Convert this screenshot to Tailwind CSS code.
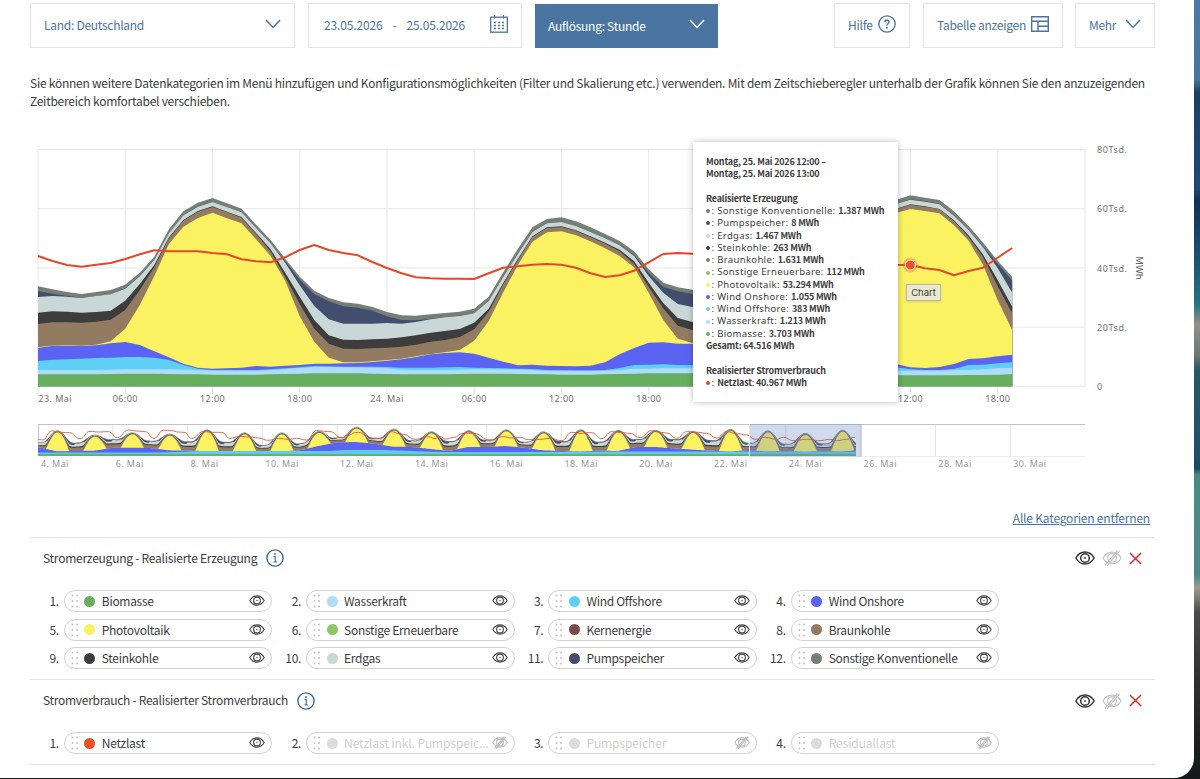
<!DOCTYPE html>
<html lang="de">
<head>
  <meta charset="UTF-8" />
  <meta name="viewport" content="width=device-width, initial-scale=1.0"/>
  <title>Marktdaten visualisieren</title>
  <script src="https://cdn.jsdelivr.net/npm/@tailwindcss/browser@4"></script>
</head>
<body class="h-[779px] overflow-hidden bg-[linear-gradient(180deg,#4a7ba6_0,#45749f_80px,#1d3f66_92px,#1f4a70_190px,#123059_200px,#1a5570_260px,#2a7482_305px,#8e928a_325px,#6d7673_355px,#255a68_370px,#1d5068_455px,#164a5e_468px,#4a8a85_475px,#4b8a84_575px,#a09c93_588px,#4a4c48_612px,#2e302d_680px,#14181a_779px)] font-['Noto_Sans_CJK_SC',sans-serif] text-[#3c3c3c]">

<svg class="hidden">
  <symbol id="eye" viewBox="0 0 20 14" fill="none" stroke="currentColor">
    <path d="M.9 7C3 3.2 6.2 1.1 10 1.1S17 3.2 19.1 7C17 10.8 13.800 12.900 10 12.900S3 10.800 .9 7Z"/>
    <circle cx="10" cy="7" r="4.300"/><circle cx="10" cy="7" r=".9" fill="currentColor" stroke="none"/>
  </symbol>
  <symbol id="eye-off" viewBox="0 0 20 14" fill="none" stroke="currentColor" overflow="visible">
    <path d="M.9 7C3 3.2 6.2 1.1 10 1.1S17 3.2 19.1 7C17 10.8 13.800 12.900 10 12.900S3 10.800 .9 7Z"/>
    <circle cx="10" cy="7" r="4.300"/><path d="M3 14.500 15.500-.500M5 14.800 17.500-.200"/>
  </symbol>
  <symbol id="down" viewBox="0 0 16 10" fill="none" stroke="currentColor">
    <path d="M1 1 8 8.500 15 1"/>
  </symbol>
  <symbol id="info" viewBox="0 0 18 18" fill="none" stroke="currentColor">
    <circle cx="9" cy="9" r="8.100" stroke-width="1.400"/><path d="M7.500 7.500H9.200V13M7.500 13H11" stroke-width="1.100"/><circle cx="9" cy="5" r=".9" fill="currentColor" stroke="none"/>
  </symbol>
  <symbol id="close" viewBox="0 0 14 14" fill="none" stroke="currentColor">
    <path d="M1 1 13 13M13 1 1 13" stroke-width="1.600"/>
  </symbol>
</svg>

<main class="h-[778px] w-[1194px] rounded-br-[20px] bg-white pl-[30px] pr-[39px] pt-[3px]">

  <!-- Toolbar -->
  <div class="flex h-[45px] items-stretch text-[12px] tracking-[-0.27px] text-[#4a75a0]">
    <button class="flex w-[265px] items-center justify-between border border-[#e4e4e4] pl-[13px] pr-[13px]">
      <span class="mb-px">Land: Deutschland</span>
      <svg class="mb-1 h-[10px] w-4 stroke-[1.5]"><use href="#down"/></svg>
    </button>
    <div class="ml-[13px] flex w-[214px] items-center border border-[#e4e4e4] pl-[15px] pr-[13px] tracking-[-0.15px]">
      <span class="mb-px">23.05.2026</span><span class="mb-px ml-[10px]">-</span><span class="mb-px ml-[10px]">25.05.2026</span>
      <svg class="mb-[3px] ml-auto h-[18px] w-[18px]" viewBox="0 0 18 18" fill="none" stroke="currentColor">
        <rect x=".7" y="2.200" width="16.600" height="15" stroke-width="1.300"/>
        <path d="M4.500 0V3.500M13.500 0V3.500" stroke-width="1.200"/>
        <path d="M4 7.500H6M8 7.500H10M12 7.500H14M4 10.500H6M8 10.500H10M12 10.500H14M4 13.500H6M8 13.500H10M12 13.500H14" stroke-width="1.500"/>
      </svg>
    </div>
    <button class="ml-[13px] mt-px flex w-[183px] items-center justify-between bg-[#4a75a1] px-[13px] text-white">
      <span class="mb-px">Auflösung: Stunde</span>
      <svg class="mb-1 h-[10px] w-4 stroke-[1.5]"><use href="#down"/></svg>
    </button>
    <button class="ml-auto flex w-[76px] items-center justify-between border border-[#e4e4e4] px-[13px]">
      <span class="mb-px">Hilfe</span>
      <svg class="mb-[3px] h-[18px] w-[18px]" viewBox="0 0 18 18" fill="none" stroke="currentColor">
        <circle cx="9" cy="9" r="8.200" stroke-width="1.300"/>
        <path d="M6.900 7.200C6.900 4.300 11.200 4.500 11.100 7 11 8.500 9 8.600 9 10.600" stroke-width="1.500"/><circle cx="9" cy="12.800" r=".95" fill="currentColor" stroke="none"/>
      </svg>
    </button>
    <button class="ml-[13px] flex w-[140px] items-center justify-between whitespace-nowrap border border-[#e4e4e4] px-[13px]">
      <span class="mb-px">Tabelle anzeigen</span>
      <svg class="mb-1 h-4 w-[18px] shrink-0" viewBox="0 0 18 16" fill="none" stroke="currentColor" stroke-width="1.400">
        <path d="M.7.7H17.300V15.300H.7ZM.7 5.300H17.300M7 5.300V15.300M7 10.300H17.300"/>
      </svg>
    </button>
    <button class="ml-[12px] flex w-[80px] items-center justify-between border border-[#e4e4e4] px-[13px]">
      <span class="mb-px">Mehr</span>
      <svg class="mb-1 h-[10px] w-4 stroke-[1.5]"><use href="#down"/></svg>
    </button>
  </div>

  <p class="mt-[26px] whitespace-nowrap text-[12px] leading-[18px] tracking-[-0.25px]">Sie können weitere Datenkategorien im Menü hinzufügen und Konfigurationsmöglichkeiten (Filter und Skalierung etc.) verwenden. Mit dem Zeitschieberegler unterhalb der Grafik können Sie den anzuzeigenden<br>Zeitbereich komfortabel verschieben.</p>

  <!-- Chart -->
  <div class="relative mt-[30px] h-[335px]">
    <svg id="chart" class="block h-[335px] w-[1125px]" viewBox="30 140 1125 335"></svg>

    <div class="absolute left-[662.500px] top-[2px] h-[260px] w-[205px] whitespace-nowrap bg-white pl-[13.500px] pt-[14px] text-[9px] font-bold leading-[12.27px] tracking-[-0.22px] shadow-[0_0_6px_rgba(0,0,0,0.28)]">
      <p>Montag, 25. Mai 2026 12:00 –</p>
      <p>Montag, 25. Mai 2026 13:00</p>
      <p class="mt-[12.27px]">Realisierte Erzeugung</p>
      <div id="values"></div>
      <p>Gesamt: 64.516 MWh</p>
      <p class="mt-[12.27px]">Realisierter Stromverbrauch</p>
      <p class="flex h-[12.27px] items-center"><i class="mr-[1.500px] h-1 w-1 rounded-full bg-[#e8402a]"></i><span class="whitespace-pre font-['Noto_Sans',sans-serif] text-[9.5px] font-normal tracking-[0.3px]">: </span>Netzlast<span class="whitespace-pre font-normal">: </span>40.967 MWh</p>
    </div>
    <div class="absolute left-[876px] top-[144px] h-[17px] w-[35px] border border-[#b9b8a0] bg-[#ebe9cf] text-center font-[Inter,sans-serif] text-[9.5px] leading-[15px] shadow">Chart</div>
  </div>

  <div class="mt-[34px] flex h-[18px] justify-end pr-[5px] text-[12px] leading-[18px] tracking-[-0.19px]">
    <a class="text-[#4a75a0] underline">Alle Kategorien entfernen</a>
  </div>

  <!-- Categories -->
  <section class="mt-[10px] h-[142px] border-t border-[#e4e4e4]">
    <div class="flex h-[41px] items-center pl-[13px] pr-[13px] text-[12px] tracking-[-0.24px]">
      <h3 class="mb-[2px]">Stromerzeugung - Realisierte Erzeugung</h3>
      <svg class="mb-px ml-[9px] h-[18px] w-[18px] text-[#3c6a9a]"><use href="#info"/></svg>
      <svg class="mb-px ml-auto h-[14px] w-5 stroke-[1.5] text-[#333]"><use href="#eye"/></svg>
      <svg class="mb-px ml-[7px] h-[14px] w-5 overflow-visible stroke-[1.2] text-[#c4c4c4]"><use href="#eye-off"/></svg>
      <svg class="mb-px ml-[7px] h-[13px] w-[13px] text-[#c8302c]"><use href="#close"/></svg>
    </div>
    <div id="erzeugung" class="mt-[11px] grid grid-cols-[repeat(4,242.3px)] gap-y-[6.6px]"></div>
  </section>
  <section class="h-[86px] border-y border-[#e4e4e4]">
    <div class="flex h-[41px] items-center pl-[13px] pr-[13px] text-[12px] tracking-[-0.28px]">
      <h3 class="mb-px">Stromverbrauch - Realisierter Stromverbrauch</h3>
      <svg class="ml-[9px] h-[18px] w-[18px] text-[#3c6a9a]"><use href="#info"/></svg>
      <svg class="ml-auto h-[14px] w-5 stroke-[1.5] text-[#333]"><use href="#eye"/></svg>
      <svg class="ml-[7px] h-[14px] w-5 overflow-visible stroke-[1.2] text-[#c4c4c4]"><use href="#eye-off"/></svg>
      <svg class="ml-[7px] h-[13px] w-[13px] text-[#c8302c]"><use href="#close"/></svg>
    </div>
    <div id="verbrauch" class="mt-[11px] grid grid-cols-[repeat(4,242.3px)]"></div>
  </section>
</main>

<script>
  // Tooltip
  const values = [
    ['Sonstige Konventionelle', '1.387', '#757f74'], ['Pumpspeicher', '8', '#434d6e'],
    ['Erdgas', '1.467', '#cad7d7'], ['Steinkohle', '263', '#3d3d3d'], ['Braunkohle', '1.631', '#937b61'],
    ['Sonstige Erneuerbare', '112', '#8cc665'], ['Photovoltaik', '53.294', '#fbf262'],
    ['Wind Onshore', '1.055', '#5b63f2'], ['Wind Offshore', '383', '#5fcff6'],
    ['Wasserkraft', '1.213', '#afdcfa'], ['Biomasse', '3.703', '#67ae5d'],
  ];
  document.getElementById('values').innerHTML = values.map(([name, val, color]) =>
    `<p class="flex h-[12.27px] items-center"><i class="mr-[1.500px] h-1 w-1 rounded-full" style="background:${color}"></i><span class="whitespace-pre font-['Noto_Sans',sans-serif] font-normal text-[9.5px] tracking-[0.34px]">: ${name}: </span>${val} MWh</p>`).join('');

  // Category pills
  function pill([name, color, off], i) {
    return `<div class="flex h-[22px] items-center text-[12px] tracking-[-0.3px]">
      <span class="w-[29.5px] text-right">${i + 1}.</span>
      <div class="ml-[5px] flex h-[22px] w-[208.500px] shrink-0 items-center whitespace-nowrap rounded-full border border-[#d2d2d2] pl-[6px] pr-[6px]">
        <svg class="h-[14px] w-[8px] shrink-0" viewBox="0 0 8 14" fill="#c2c2c2"><circle cx="1.500" cy="1.500" r="1"/><circle cx="6" cy="1.500" r="1"/><circle cx="1.500" cy="7" r="1"/><circle cx="6" cy="7" r="1"/><circle cx="1.500" cy="12.500" r="1"/><circle cx="6" cy="12.500" r="1"/></svg>
        <i class="ml-[5.500px] h-[11px] w-[11px] shrink-0 rounded-full" style="background:${color}"></i>
        <span class="ml-[6.500px] ${off ? 'text-[#cfcfcf] tracking-[-0.1px]' : ''}">${name}</span>
        <svg class="mb-px ml-auto h-[11px] w-4 shrink-0 overflow-visible stroke-[1.4] ${off ? 'text-[#bdbdbd]' : 'text-[#444]'}"><use href="${off ? '#eye-off' : '#eye'}"/></svg>
      </div>
    </div>`;
  }
  document.getElementById('erzeugung').innerHTML = [
    ['Biomasse', '#67ae5d'], ['Wasserkraft', '#afdcfa'], ['Wind Offshore', '#5fcff6'], ['Wind Onshore', '#5b63f2'],
    ['Photovoltaik', '#fbf262'], ['Sonstige Erneuerbare', '#8cc665'], ['Kernenergie', '#7d4a48'], ['Braunkohle', '#937b61'],
    ['Steinkohle', '#3d3d3d'], ['Erdgas', '#cad7d7'], ['Pumpspeicher', '#434d6e'], ['Sonstige Konventionelle', '#757f74'],
  ].map(pill).join('');
  document.getElementById('verbrauch').innerHTML = [
    ['Netzlast', '#ed4f27'], ['Netzlast inkl. Pumpspeic...', '#dcdcdc', 1], ['Pumpspeicher', '#dcdcdc', 1], ['Residuallast', '#dcdcdc', 1],
  ].map(pill).join('');

  // Main chart: upper edge of every stacked layer, in thirds of a pixel
  const X0 = 38, HOUR = 14.54, BASE = 386.3;
  const hours = [...Array(46).keys(), 59, 60, 61, 62, 63, 64, 65, 66, 67];
  const layers = [
    ['#757f74', [439,448,456,462,456,450,434,398,350,268,214,188,174,190,206,254,300,356,410,452,474,487,491,501,516,526,527,523,519,515,506,470,397,327,262,237,232,244,262,282,303,334,388,428,442,449,180,166,173,180,214,258,308,362,411]],
    ['#434d6e', [453,461,467,473,468,463,445,408,358,279,225,199,185,200,216,263,309,364,419,463,484,499,503,512,529,540,541,536,531,527,519,482,409,341,275,249,245,257,275,294,315,345,399,440,454,461,191,178,184,192,226,269,319,371,422]],
    ['#cad7d7', [471,468,470,474,468,463,446,409,359,280,226,200,186,201,217,264,310,368,436,498,538,551,551,551,549,551,546,538,532,528,520,483,410,342,276,250,246,258,276,295,316,348,408,458,492,501,192,179,185,193,227,270,322,384,458]],
    ['#3d3d3d', [518,514,515,518,516,512,482,432,375,292,240,213,199,215,231,279,328,398,470,540,586,599,600,598,596,592,586,578,573,567,548,506,428,357,289,262,259,271,289,308,329,364,428,489,534,546,206,193,199,207,241,286,344,420,500]],
    ['#937b61', [552,547,547,548,545,539,510,450,382,294,242,215,201,217,233,282,334,410,492,566,611,626,627,625,623,620,614,605,600,591,568,515,432,360,291,264,261,273,291,311,334,371,440,505,557,570,207,194,200,208,243,290,352,438,520]],
    ['#fbf262', [621,617,616,617,614,604,566,495,408,312,260,234,218,235,250,298,348,422,528,605,653,667,667,664,660,656,649,642,637,630,602,543,457,375,305,277,274,286,304,325,348,382,458,540,596,609,219,207,213,220,256,302,375,480,570]],
    ['#5b63f2', [623,618,617,618,616,610,606,615,634,652,671,683,686,685,683,678,680,677,675,671,671,670,669,666,662,658,651,643,639,637,641,653,665,676,674,677,678,679,677,667,643,624,608,607,611,611,672,682,684,681,672,657,655,649,644]],
    ['#5fcff6', [663,659,658,656,654,653,651,651,653,660,675,686,690,690,690,690,688,685,682,678,679,680,680,680,681,683,683,683,682,681,683,684,685,686,687,690,691,691,691,690,684,675,674,673,675,676,682,688,690,690,687,675,674,670,667]],
    ['#afdcfa', [690,690,690,690,690,689,688,688,688,688,689,690,692,692,692,692,690,687,684,681,681,682,682,683,685,689,690,690,690,689,688,688,688,688,690,692,692,693,693,692,690,686,686,685,685,685,692,692,692,692,690,690,688,685,683]],
    ['#67ae5d', [703,703,703,703,703,702,701,701,701,702,703,703,704,704,704,704,703,702,701,700,700,700,700,701,702,703,703,703,703,702,701,701,701,702,703,703,704,704,704,703,702,701,700,700,700,700,706,706,706,706,706,705,705,704,703]],
  ];
  const load = [348,363,375,380,374,369,357,343,331,334,334,334,339,343,358,364,367,352,330,315,330,339,346,366,384,400,412,415,416,416,417,400,383,379,374,372,374,383,400,411,406,392,367,342,339,341,374,375,385,390,406,393,383,353,324];
  const pts = ys => ys.map((y, i) => (X0 + hours[i] * HOUR).toFixed(1) + ',' + (140 + y / 3).toFixed(1)).join(' ');
  const label = (x, y, t, a) => `<text x="${x}" y="${y}" text-anchor="${a}">${t}</text>`;

  let s = '<g stroke="#e6e6e6" fill="none">';
  for (let i = 0; i < 5; i++) s += `<path d="M38 ${149.5 + i * 59.2}H1085"/>`;
  for (let i = 0; i <= 12; i++) s += `<path d="M${X0 + i * 87.25} 149.500V${i < 12 ? 394 : 386.5}"/>`;
  s += '</g>';
  for (const [color, ys] of layers) s += `<polygon fill="${color}" points="38,${BASE} ${pts(ys)} 1012.2,${BASE}"/>`;
  s += `<polyline fill="none" stroke="#e4482a" stroke-width="2" stroke-linejoin="round" points="${pts(load)}"/>`;
  s += '<circle cx="910.300" cy="265" r="7.500" fill="#ed4f27" fill-opacity=".35"/><circle cx="910.300" cy="265" r="5" fill="#ed4f27" stroke="#fff"/>';

  s += `<g class="font-['Noto_Sans',sans-serif] text-[9px] tracking-[0.4px]" fill="#707070">`;
  s += label(38.5, 402, '23. Mai', 'start');
  ['06:00', '12:00', '18:00', '24. Mai', '06:00', '12:00', '18:00', '', '', '12:00', '18:00'].forEach((t, i) => {
    s += label(X0 + (i + 1) * 87.25, 402, t, 'middle');
  });
  s += '</g>';
  s += `<g class="font-['Noto_Sans',sans-serif] text-[9px] tracking-[0.6px]" fill="#707070">`;
  ['80Tsd.', '60Tsd.', '40Tsd.', '20Tsd.', '0'].forEach((t, i) => { s += label(1097, 153.3 + i * 59.1, t, 'start'); });
  s += '</g>';
  s += `<text class="font-['Noto_Sans',sans-serif] text-[9.5px]" fill="#606060" transform="translate(1135.500 268) rotate(90)" text-anchor="middle">MWh</text>`;

  // Navigator: one entry per day (peak, level at midnight, wind level)
  const DAY = 37.39, NB = 455.5;
  const peak = [46,59,52,56,43,52,52,48,35,41,49,46,43,49,43,45,45,48,42,46,54,44];
  const night = [82,83,72,77,79,80,90,85,67,68,76,78,74,80,78,80,72,72,75,83,86,85,86];
  const wind = [97,108,98,99,107,108,108,106,82,86,96,108,96,98,108,107,96,100,107,105,108,108,104];
  const windDay = [109,107,98,106,108,109,109,93,81,95,102,96,93,106,110,108,96,104,110,110,111,110];
  const nav = [[], [], [], [], [], [], []];
  for (let h = 0; h <= 525; h++) {
    const d = Math.min(21, Math.floor(h / 24)), f = h / 24 - d;
    const p = (f - 0.22) / 0.61;
    const bell = p > 0 && p < 1 ? Math.pow(Math.sin(Math.PI * p), 0.9) : 0;
    const q = (f - 0.1) / 0.84;
    const wide = q > 0 && q < 1 ? Math.pow(Math.sin(Math.PI * q), 2) : 0;
    const w = f < 0.5 ? wind[d] + (windDay[d] - wind[d]) * f * 2 : windDay[d] + (wind[d + 1] - windDay[d]) * (f - 0.5) * 2;
    const n = night[d] + (night[d + 1] - night[d]) * f;
    const top = n + (peak[d] - n) * Math.max(wide, bell * 0.97);
    const pv = Math.max(top + 5, w + (peak[d] + 6 - w) * bell);
    const gap = pv - top;
    [top, top + Math.min(2.5, gap * 0.4), top + gap * (f < 0.25 ? 0.12 : 0.28), top + gap * 0.48, top + gap * 0.6, bell ? pv : w, w].forEach((y, i) => {
      nav[i].push((X0 + h / 24 * DAY).toFixed(1) + ',' + (415 + y / 3).toFixed(2));
    });
  }
  const navColors = ['#757f74', '#434d6e', '#cad7d7', '#3d3d3d', '#937b61', '#fbf262', '#5b63f2'];
  s += '<path d="M38 424.500H1085M38.500 424.500V456" stroke="#c4c4c4" fill="none"/><path d="M862 456.500H1085" stroke="#ececec"/>';
  for (let i = 1; i < 14; i++) s += `<path d="M${X0 + i * 2 * DAY} 425V456.500" stroke="#e4e4e4"/>`;
  nav.forEach((l, i) => { s += `<polygon fill="${navColors[i]}" points="38,${NB} ${l.join(' ')} 855.900,${NB}"/>`; });
  s += '<path d="M38 452.500H160L200 451H330L345 450H385L440 452H520L600 451.500H856V455H38Z" fill="#5fc8f5"/><path d="M38 454.800H856" stroke="#4cc35a" stroke-width="1.400"/>';

  const navLoad = [25,73,38,75,65,48,95,52,118,53,150,71,180,49,205,51,235,50,262,68,295,45,320,48,345,50,372,70,400,46,425,47,445,51,462,52,485,70,520,50,545,52,575,52,600,70,630,64,660,66,685,69,715,76,745,70,775,73,800,70,830,75,860,47,900,50,935,68,985,52,1020,70,1050,70,1080,50,1120,58,1155,73,1195,65,1215,71,1230,65,1247,72,1270,68,1300,55,1330,55,1380,75,1420,65,1445,69,1470,67,1495,74,1530,73,1560,70,1595,77,1625,52,1650,55,1685,53,1715,71,1745,50,1775,53,1800,55,1830,68,1865,47,1890,52,1910,54,1940,70,1970,50,2005,52,2030,55,2060,69,2090,50,2120,56,2150,60,2175,73,2205,67,2240,73,2260,67,2290,77,2330,73,2370,77,2400,73,2420,77,2450,73,2475,67];
  let path = '', px, py;
  for (let i = 0; i < navLoad.length; i += 2) {
    const x = 30 + navLoad[i] / 3, y = 415 + navLoad[i + 1] / 3;
    path += i ? `C${(px + x) / 2} ${py} ${(px + x) / 2} ${y} ${x} ${y}` : `M${x} ${y}`;
    px = x; py = y;
  }
  s += `<path d="${path}" fill="none" stroke="#e4553a" stroke-width=".9"/>`;
  s += '<rect x="749.500" y="424" width="112.500" height="33" fill="#6685c2" fill-opacity=".3"/><path d="M749.500 424V457" stroke="#e8e8e8"/>';
  s += `<g class="font-['Noto_Sans',sans-serif] text-[9px] tracking-[0.4px]" fill="#999">`;
  for (let i = 0; i < 14; i++) s += label(41 + i * 2 * DAY, 466.5, (4 + i * 2) + '. Mai', 'start');
  s += '</g>';
  document.getElementById('chart').innerHTML = s;
</script>
</body>
</html>
